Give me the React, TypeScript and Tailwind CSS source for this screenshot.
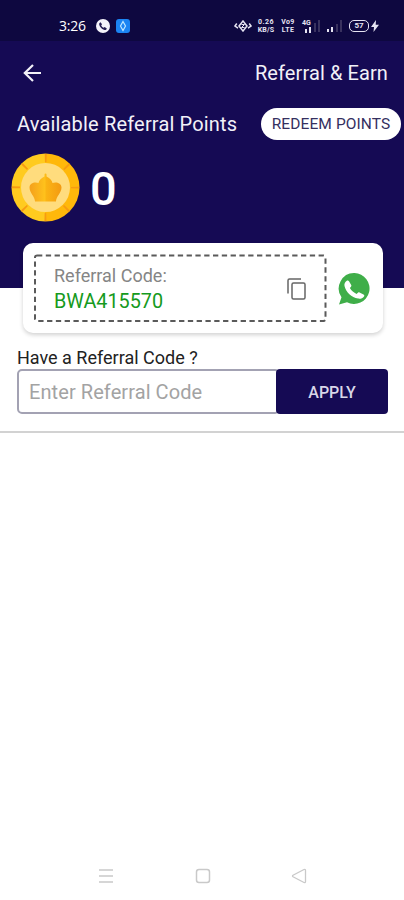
import { useState } from "react";

function StatusBar() {
  return (
    <div className="flex h-[41px] items-start bg-[#0e0840] pt-[17px] text-white">
      <span className="ml-[59px] w-[28px] whitespace-nowrap text-[14px] leading-[18px] tracking-[-0.2px] font-['Open_Sans',sans-serif]">
        3:26
      </span>
      <svg className="ml-[9px] mt-[2px] h-[14px] w-[14px]" viewBox="0 0 14 14">
        <circle cx="7" cy="7" r="7" fill="#f4f3fa" />
        <path
          d="M4.6 3.2 6 5.3 5.2 6.4Q6 8 7.6 8.8l1.1-.8 2.1 1.4c-.5 1.5-1.5 1.8-2.9 1.3C5.5 9.8 4 8.3 3.3 6c-.4-1.4.1-2.4 1.3-2.8Z"
          fill="#241c52"
        />
      </svg>
      <svg className="ml-[6px] mt-[2px] h-[14px] w-[14px]" viewBox="0 0 14 14">
        <rect width="14" height="14" rx="3" fill="#1b84f3" />
        <path d="M7 2.500 9.500 7 7 11.500 4.500 7Z" fill="none" stroke="#bfe6ff" strokeWidth="1.200" />
      </svg>
      <div className="ml-auto mr-[25px] flex h-[18px] items-center font-['Roboto',sans-serif] font-bold text-[#e6e4f2]">
        <svg className="h-[12px] w-[18px]" viewBox="0 0 18 12" fill="none" stroke="currentColor">
          <path d="M2.800 3.500 1 6l3 2.200M15.200 3.500 17 6l-3 2.200" strokeWidth="1.500" />
          <path d="m9 1 4 5-4 5-4-5Z" strokeWidth="1.500" />
          <path d="M7.500 4.500h3L7.500 7.500h3" strokeWidth="1" />
        </svg>
        <div className="ml-[4px] w-[20px] text-center text-[7px] leading-[8px] tracking-[0.500px]">
          <div>0.26</div>
          <div className="tracking-[0.200px]">KB/S</div>
        </div>
        <div className="ml-[4px] w-[16px] text-center text-[7px] leading-[8px] tracking-[0.400px]">
          <div>Vo9</div>
          <div>LTE</div>
        </div>
        <div className="ml-[6px] w-[11px] text-[7px] leading-[7px]">
          <div>4G</div>
          <svg className="ml-[2px] h-[6px] w-[8px]" viewBox="0 0 8 6">
            <path d="M1 2h2v4H1zM5 0h2v6H5z" fill="currentColor" />
          </svg>
        </div>
        <svg className="h-[14px] w-[7px]" viewBox="0 0 7 14">
          <path d="M1 4h2v9H1zM5 1h2v12H5z" fill="#39325f" />
        </svg>
        <svg className="ml-[7px] h-[14px] w-[15px]" viewBox="0 0 15 14">
          <path d="M0 10h2v3H0zM4 8h2v5H4z" fill="currentColor" />
          <path d="M9 5h2v8H9zM13 1h2v12h-2z" fill="#39325f" />
        </svg>
        <div className="ml-[7px] flex h-[12px] w-[20px] items-center justify-center rounded-[5px] border-[1.500px] border-current text-[8px] leading-none">
          57
        </div>
        <svg className="ml-[2px] h-[12px] w-[8px]" viewBox="0 0 8 12">
          <path d="M5 0 0 7h3l-.5 5L8 4.800H4.700Z" fill="currentColor" />
        </svg>
      </div>
    </div>
  );
}

function Coin() {
  return (
    <svg className="h-[70px] w-[70px]" viewBox="0 0 70 70">
      <defs>
        <linearGradient id="rim" x1="0" x2="1">
          <stop offset="0.5" stopColor="#ffcb1f" />
          <stop offset="0.5" stopColor="#ffb80a" />
        </linearGradient>
        <linearGradient id="crown" x1="0" x2="1">
          <stop offset="0.05" stopColor="#f5a31c" />
          <stop offset="0.48" stopColor="#ffc21c" />
          <stop offset="0.52" stopColor="#fbb414" />
          <stop offset="1" stopColor="#f39a12" />
        </linearGradient>
      </defs>
      <circle cx="35.500" cy="35.500" r="34" fill="url(#rim)" />
      <circle
        cx="35.500"
        cy="35.500"
        r="29.500"
        fill="none"
        stroke="#f79b12"
        strokeWidth="8"
        strokeDasharray="1.800 21.370"
        strokeDashoffset="0.900"
      />
      <circle cx="35.500" cy="35.500" r="24.500" fill="#ffdc7d" />
      <path
        d="M25 49.500C25 44.500 19.500 41 19.500 35.500C19.500 31 25 29.500 28.500 31C29 28 31.500 26 34.500 24.500V22.500A1 1 0 1 1 36.500 22.500V24.500C39.500 26 42 28 42.500 31C46 29.500 51.500 31 51.500 35.500C51.500 41 46 44.500 46 49.500Z"
        fill="url(#crown)"
      />
    </svg>
  );
}

function ReferralCard({ code }: { code: string }) {
  return (
    <div className="ml-[23px] flex h-[90px] w-[360px] items-center rounded-[10px] bg-white pl-[11px] shadow-[0_2px_4px_rgba(0,0,0,0.18)]">
      <div className="relative flex h-[69px] w-[293px] items-center justify-between pl-[20px] pr-[20px]">
        <svg className="absolute inset-0 h-full w-full" viewBox="0 0 293 69">
          <rect
            x="1"
            y="1.500"
            width="290.500"
            height="65.500"
            rx="2"
            fill="none"
            stroke="#5a5a5a"
            strokeWidth="2"
            strokeDasharray="5.300 3.500"
          />
        </svg>
        <div className="pt-[2px]">
          <div className="text-[18px] leading-[26px] text-[#858585]">Referral Code:</div>
          <div className="text-[19.800px] leading-[26px] text-[#159a20]">{code}</div>
        </div>
        <svg className="mr-px mt-px h-[22px] w-[19px]" viewBox="0 0 19 22" fill="none" stroke="#666" strokeWidth="1.500">
          <path d="M1 15.500V2.500Q1 1 2.500 1H14" />
          <rect x="5" y="5" width="13" height="16" rx="1.500" />
        </svg>
      </div>
      <svg className="ml-[11px] mt-[2px] h-[32px] w-[32px]" viewBox="0 0 32 32">
        <path d="M16.500 0a15.500 15.500 0 1 1-7.500 29.300L1 31.500l2.500-7.200A15.500 15.500 0 0 1 16.500 0Z" fill="#3fae49" />
        <path
          d="M8.800 7.700c.8-.5 1.700-.3 2.200.6l2.200 3.800c.4.800.2 1.300-1.300 3 1.600 2.800 3.900 4.700 6.700 5.800 1.400-1.300 2-1.900 2.900-1.500l4 2c1 .5 1 1.200.5 2-1.300 1.900-3.700 2.700-5.900 2.200C13.500 24.200 8 19.500 6.500 13c-.5-2.300.6-4.300 2.300-5.300Z"
          fill="#fff"
        />
      </svg>
    </div>
  );
}

function NavBar() {
  return (
    <div className="mt-auto flex h-[48px] items-center justify-between pl-[98px] pr-[97px] text-[#c9c9c9]">
      <svg className="h-[16px] w-[16px]" viewBox="0 0 16 16" stroke="currentColor" strokeWidth="1.500">
        <path d="M1 2h14M1 8h14M1 14h14" />
      </svg>
      <svg className="h-[16px] w-[16px]" viewBox="0 0 16 16" fill="none" stroke="currentColor" strokeWidth="1.500">
        <rect x="1.500" y="1.500" width="13" height="13" rx="2.500" />
      </svg>
      <svg className="h-[16px] w-[16px]" viewBox="0 0 16 16" fill="none" stroke="currentColor" strokeWidth="1.300">
        <path d="M13 1.500 2 7.300q-1 .7 0 1.400l11 5.800q1.500.5 1.500-1V2.500q0-1.500-1.500-1Z" />
      </svg>
    </div>
  );
}

export default function App() {
  const [code, setCode] = useState("");

  return (
    <div className="flex h-[900px] w-[404px] flex-col overflow-hidden bg-white font-['Roboto',sans-serif]">
      <StatusBar />
      <div className="h-[247px] shrink-0 bg-[#150a54] text-[#f2f1f8]">
        <div className="flex h-[64px] items-center justify-between pl-[23px] pr-[16px]">
          <svg className="h-[18px] w-[18px]" viewBox="0 0 18 18" fill="none" stroke="currentColor" strokeWidth="2.200">
            <path d="M18 9H2M10 1 1.800 9l8.200 8" />
          </svg>
          <h1 className="text-[20px] leading-[24px] tracking-[0.100px]">Referral &amp; Earn</h1>
        </div>
        <div className="flex h-[38px] items-center justify-between pl-[17px] pr-[3px]">
          <span className="whitespace-nowrap text-[20px] leading-[24px] tracking-[0.170px]">
            Available Referral Points
          </span>
          <button className="h-[32px] w-[140px] whitespace-nowrap rounded-full bg-white pt-[2px] text-[15.500px] tracking-[0.100px] text-[#35305f]">
            REDEEM POINTS
          </button>
        </div>
        <div className="flex items-center gap-[10px] pl-[10px] pt-[9px]">
          <Coin />
          <span className="pt-[3px] text-[47px] font-medium leading-[67px] text-white">0</span>
        </div>
        <div className="pt-[21px]">
          <ReferralCard code="BWA415570" />
        </div>
      </div>

      <div className="mt-[59px] h-[86px] border-b-2 border-[#d2d2d2] pl-[17px] pr-[16px]">
        <label htmlFor="code" className="block text-[18px] leading-[22px] text-[#222]">
          Have a Referral Code ?
        </label>
        <div className="flex h-[45px]">
          <input
            id="code"
            value={code}
            onChange={(e) => setCode(e.target.value)}
            placeholder="Enter Referral Code"
            className="w-[263px] rounded-[5px] border-2 border-[#a3a2b3] pl-[10px] text-[20px] tracking-[0.080px] outline-none placeholder:text-[#a3a3a3]"
          />
          <button className="z-10 ml-[-4px] w-[112px] rounded-[4px] bg-[#150a54] pt-[2px] text-[16px] font-medium text-[#d9d7e8]">
            APPLY
          </button>
        </div>
      </div>
      <NavBar />
    </div>
  );
}
